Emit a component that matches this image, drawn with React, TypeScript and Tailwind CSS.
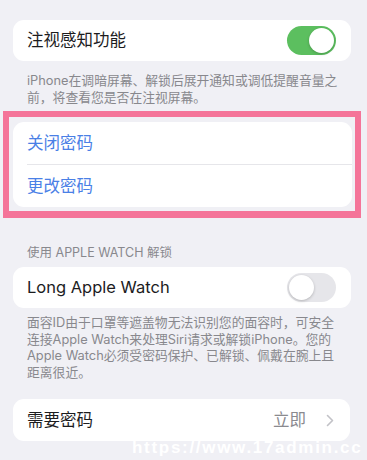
import React from 'react';

const FONT = 'font-["Inter","Noto_Sans_CJK_SC",sans-serif]';

function Toggle({ on }: { on: boolean }) {
  return (
    <div
      className={`flex h-[29px] w-[49px] items-center rounded-full p-[2px] ${
        on ? 'justify-end bg-[#5cbf5f]' : 'justify-start bg-[#e6e6ea]'
      }`}
    >
      <div className="h-[25px] w-[25px] rounded-full bg-white shadow-[0_1px_3px_rgba(0,0,0,0.22)]" />
    </div>
  );
}

function Chevron() {
  return (
    <svg width="8" height="13" viewBox="0 0 8 13" fill="none">
      <path d="M1.5 1.5 L6.5 6.5 L1.5 11.5" stroke="#c2c2c7" strokeWidth="1.6" strokeLinecap="round" strokeLinejoin="round" />
    </svg>
  );
}

export default function App() {
  return (
    <div className={`relative h-[460px] w-[367px] overflow-hidden bg-[#f0f0f5] ${FONT}`}>
      <div className="flex flex-col pt-[20px]">
        {/* 注视感知功能 */}
        <div className="mx-[13px] mr-[16px] flex h-[41px] items-center justify-between rounded-[11px] bg-white pl-[14px] pr-[15px]">
          <span className="text-[16.5px] text-[#1c1c1e]">注视感知功能</span>
          <Toggle on />
        </div>
        <p className="mt-[11px] whitespace-nowrap pl-[27px] text-[12.8px] leading-[17px] text-[#88888d]">
          iPhone在调暗屏幕、解锁后展开通知或调低提醒音量之
          <br />
          前，将查看您是否在注视屏幕。
        </p>

        {/* highlighted passcode group */}
        <div className="ml-[3px] mr-[6px] mt-[5px] border-[6px] border-b-[7px] border-[#f47499] pb-[4px] pl-[4px] pr-[3px] pt-[5px]">
          <div className="overflow-hidden rounded-[11px] bg-white">
            <div className="flex h-[42px] items-center pl-[14px]">
              <span className="text-[16.5px] text-[#4a80e6]">关闭密码</span>
            </div>
            <div className="ml-[14px] h-px bg-[#e6e6ea]" />
            <div className="flex h-[42px] items-center pl-[14px]">
              <span className="text-[16.5px] text-[#4a80e6]">更改密码</span>
            </div>
          </div>
        </div>

        <div className="mt-[27px] pl-[27px] text-[12.5px] leading-[16px] text-[#88888d]">
          使用 APPLE WATCH 解锁
        </div>
        <div className="mx-[13px] mr-[16px] mt-[6px] flex h-[41px] items-center justify-between rounded-[11px] bg-white pl-[14px] pr-[15px]">
          <span className="text-[16.5px] text-[#1c1c1e]">Long Apple Watch</span>
          <Toggle on={false} />
        </div>
        <p className="mt-[7px] whitespace-nowrap pl-[27px] text-[12.8px] leading-[16.5px] text-[#88888d]">
          面容ID由于口罩等遮盖物无法识别您的面容时，可安全
          <br />
          连接Apple Watch来处理Siri请求或解锁iPhone。您的
          <br />
          Apple Watch必须受密码保护、已解锁、佩戴在腕上且
          <br />
          距离很近。
        </p>

        <div className="mx-[13px] mr-[17px] mt-[18px] flex h-[42px] items-center justify-between rounded-[11px] bg-white pl-[14px] pr-[16px]">
          <span className="text-[16.5px] text-[#1c1c1e]">需要密码</span>
          <div className="flex items-center gap-[20px]">
            <span className="text-[16.5px] text-[#8a8a8f]">立即</span>
            <Chevron />
          </div>
        </div>
      </div>

      {/* watermark */}
      <div className='absolute left-[132px] top-[438px] whitespace-nowrap font-["Liberation_Sans",sans-serif] text-[17px] font-bold leading-[20px] tracking-[1.7px] text-white'>
        https://www.17admin.cc
      </div>
    </div>
  );
}
